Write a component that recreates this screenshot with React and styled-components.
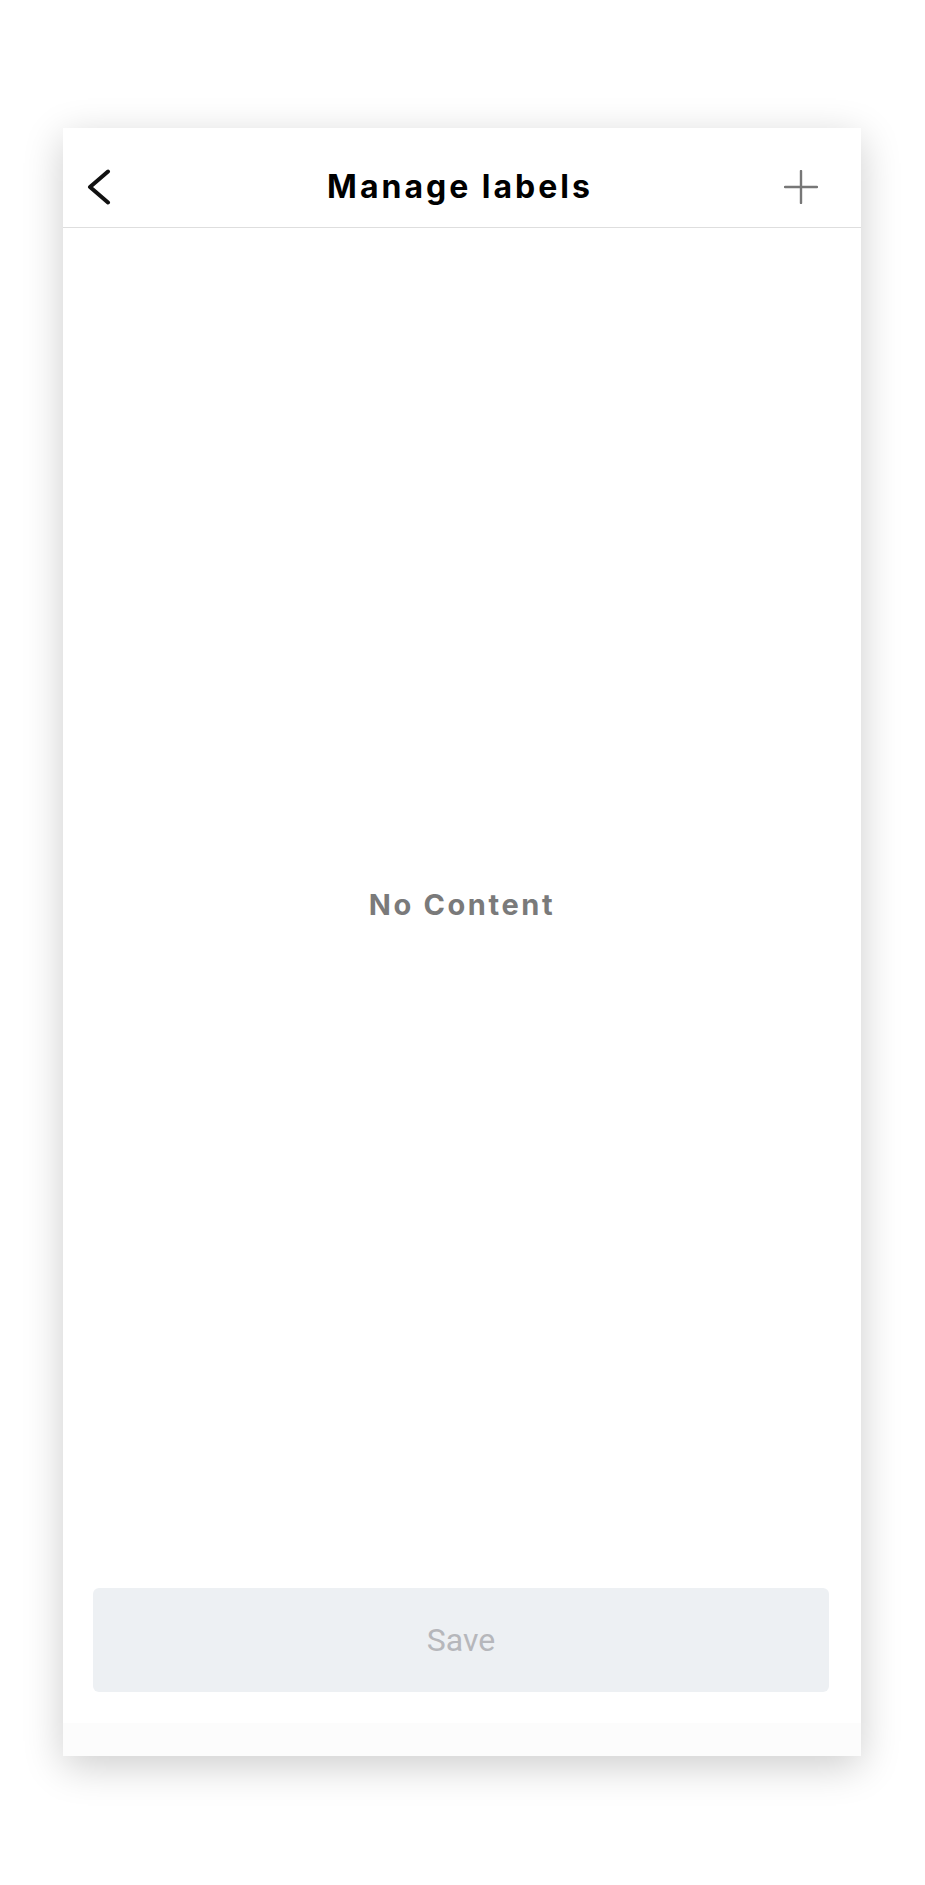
import React from 'react';
import styled, { createGlobalStyle } from 'styled-components';

const GlobalStyle = createGlobalStyle`
  html, body {
    margin: 0;
    padding: 0;
    background: #ffffff;
  }
  body {
    font-family: 'Inter', 'Noto Sans', sans-serif;
  }
`;

function BackIcon() {
  return (
    <svg width="24" height="36" viewBox="0 0 24 36" fill="none">
      <polyline
        points="21,2.5 3,18 21,33.5"
        stroke="#111"
        strokeWidth="4"
        strokeLinecap="round"
        strokeLinejoin="round"
      />
    </svg>
  );
}

function PlusIcon() {
  return (
    <svg width="34" height="34" viewBox="0 0 34 34" fill="none">
      <line x1="17" y1="1" x2="17" y2="33" stroke="#777" strokeWidth="2.4" strokeLinecap="round" />
      <line x1="1" y1="17" x2="33" y2="17" stroke="#777" strokeWidth="2.4" strokeLinecap="round" />
    </svg>
  );
}

function App() {
  return (
    <Wrapper>
      <GlobalStyle />
      <Phone>
        <Header>
          <IconButton aria-label="back">
            <BackIcon />
          </IconButton>
          <Title>Manage labels</Title>
          <IconButton aria-label="add" align="right">
            <PlusIcon />
          </IconButton>
        </Header>
        <Content>
          <Empty>No Content</Empty>
        </Content>
        <Footer>
          <SaveButton disabled>Save</SaveButton>
        </Footer>
        <HomeArea />
      </Phone>
    </Wrapper>
  );
}

export default App;

const Wrapper = styled.div`
  padding: 128px 0 129px 63px;
`;

const Phone = styled.div`
  width: 798px;
  height: 1628px;
  display: flex;
  flex-direction: column;
  background-color: #ffffff;
  box-shadow: 0 10px 38px rgba(0, 0, 0, 0.2);
`;

const Header = styled.div`
  height: 100px;
  box-sizing: border-box;
  flex-shrink: 0;
  display: grid;
  grid-template-columns: 1fr auto 1fr;
  align-items: center;
  padding: 18px 24px 0;
  border-bottom: 1px solid #dedede;
`;

const IconButton = styled.button`
  justify-self: ${props => (props.align === 'right' ? 'end' : 'start')};
  margin-right: ${props => (props.align === 'right' ? '19px' : '0')};
  display: flex;
  align-items: center;
  padding: 0;
  border: none;
  background: none;
`;

const Title = styled.div`
  font-family: 'Inter', sans-serif;
  font-size: 32px;
  font-weight: 700;
  color: #000;
  letter-spacing: 3px;
  margin-left: -4px;
`;

const Content = styled.div`
  flex: 1;
  display: flex;
  align-items: center;
  justify-content: center;
`;

const Empty = styled.div`
  font-family: 'Inter', sans-serif;
  font-size: 29px;
  font-weight: 700;
  color: #7a7a7a;
  letter-spacing: 2.6px;
`;

const Footer = styled.div`
  flex-shrink: 0;
  padding: 7px 32px 31px 30px;
`;

const SaveButton = styled.button`
  width: 100%;
  height: 104px;
  border: none;
  border-radius: 6px;
  background-color: #edf0f3;
  font-family: 'Roboto', 'Liberation Sans', sans-serif;
  font-size: 32px;
  font-weight: 400;
  color: #b6b7bb;
`;

const HomeArea = styled.div`
  height: 33px;
  flex-shrink: 0;
  background-color: #fcfcfc;
`;
